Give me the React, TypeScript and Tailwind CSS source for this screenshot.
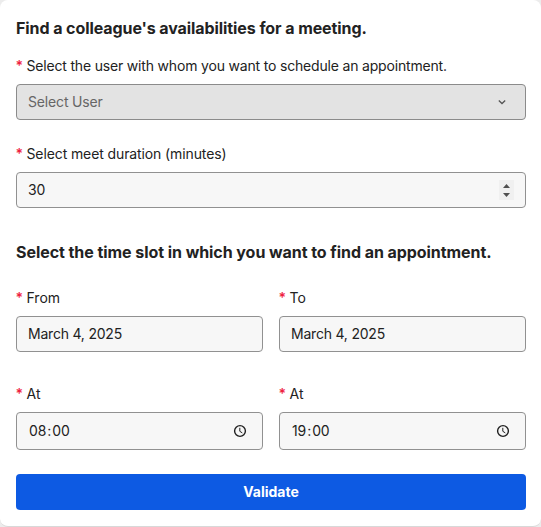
import type { ReactNode } from "react";

const box = "flex items-center rounded border border-[#919191] bg-[#f7f7f7]";

function Label({ children, tracking = "" }: { children: ReactNode; tracking?: string }) {
  return (
    <div className="flex h-5 items-center whitespace-nowrap text-[14px] leading-5">
      <span className="-ml-[0.5px] w-[11px] font-semibold text-[#ee223f]">*</span>
      <span className={tracking}>{children}</span>
    </div>
  );
}

function Clock() {
  return (
    <svg width="14" height="14" viewBox="0 0 14 14" fill="none" stroke="#202020">
      <circle cx="7" cy="7" r="5.4" strokeWidth="1.4" />
      <path d="M6.8 3.8v3.5l2.5 1.6" strokeWidth="1" />
    </svg>
  );
}

function DateField({ label, value }: { label: string; value: string }) {
  return (
    <div>
      <Label>{label}</Label>
      <div className={`${box} mt-2 h-9 px-[11px] tracking-[-0.21px]`}>{value}</div>
    </div>
  );
}

function TimeField({ hour, minute }: { hour: string; minute: string }) {
  return (
    <div>
      <Label>At</Label>
      <div className={`${box} mt-2 h-[38px] justify-between pl-3 pr-[15px]`}>
        <span className="flex tracking-[-0.1px]">
          <span>{hour}</span>
          <span className="px-[1px]">:</span>
          <span>{minute}</span>
        </span>
        <Clock />
      </div>
    </div>
  );
}

export default function App() {
  return (
    <div className="h-[527px] w-[541px] overflow-hidden bg-[#ececec] font-['Inter',sans-serif] text-[14px] leading-5 text-[#222222]">
      <div className="h-[527px] rounded-lg border-b border-[#d8d8d8] bg-white px-4 pr-[15px] pt-4">
        <h2 className="h-6 whitespace-nowrap text-[16px] font-bold leading-6 tracking-[-0.08px]">
          Find a colleague's availabilities for a meeting.
        </h2>
        <div className="mt-4">
          <Label tracking="tracking-[-0.18px]">
            Select the user with whom you want to schedule an appointment.
          </Label>
          <div className="mt-2 flex h-9 items-center justify-between rounded border border-[#8b8b8b] bg-[#e3e3e3] pl-[11px] pr-[18px] text-[#666666]">
            <span className="tracking-[-0.16px]">Select User</span>
            <svg width="10" height="10" viewBox="0 0 10 10" fill="none" stroke="#555555" strokeWidth="1.3">
              <path d="M1.8 3.6 5 6.5l3.2-2.9" />
            </svg>
          </div>
        </div>
        <div className="mt-6">
          <Label tracking="tracking-[-0.11px]">Select meet duration (minutes)</Label>
          <div className={`${box} mt-2 h-9 justify-between pl-[11px] pr-[11px]`}>
            <span className="tracking-[-0.2px]">30</span>
            <svg width="15" height="20" viewBox="0 0 15 20">
              <rect width="15" height="20" fill="#f0f0f0" />
              <path d="M4 8 7.5 4 11 8zM4 13h7l-3.5 4z" fill="#505050" />
            </svg>
          </div>
        </div>
        <h2 className="mt-8 h-6 whitespace-nowrap text-[16px] font-bold leading-6 tracking-[-0.06px]">
          Select the time slot in which you want to find an appointment.
        </h2>
        <div className="mt-6 grid grid-cols-2 gap-x-4 gap-y-8">
          <DateField label="From" value="March 4, 2025" />
          <DateField label="To" value="March 4, 2025" />
          <TimeField hour="08" minute="00" />
          <TimeField hour="19" minute="00" />
        </div>
        <button className="mt-6 block h-9 w-full rounded bg-[#0d5ae3] text-[14px] font-bold text-white">
          Validate
        </button>
      </div>
    </div>
  );
}
